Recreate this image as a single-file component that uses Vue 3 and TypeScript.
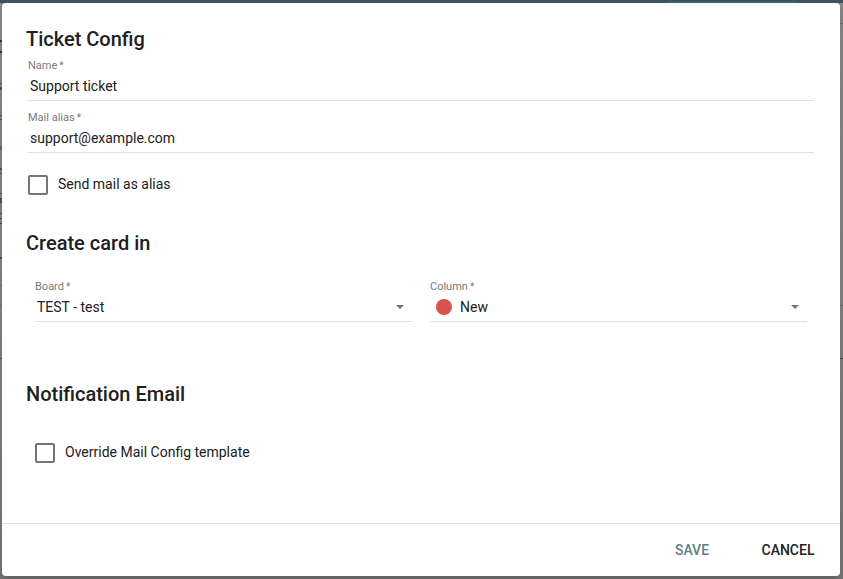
<script setup lang="ts">
import { ref } from 'vue'

const name = ref('Support ticket')
const alias = ref('support@example.com')
const sendAsAlias = ref(false)
const overrideTemplate = ref(false)
const board = ref('TEST - test')
const column = ref('New')
</script>

<template>
  <div class="page">
    <div class="backdrop" aria-hidden="true">
      <div class="topbar"><span class="tab"></span></div>
      <svg class="edge" width="2" height="400" viewBox="0 0 2 400">
        <path d="M0 40h2v2h-2zM0 51h2v2h-2z" fill="#303030" />
        <path d="M0 83h2v1h-2zM0 87h2v3h-2zM0 115h2v1h-2zM0 119h2v1h-2zM0 168h2v2h-2zM0 173h2v1h-2zM0 193h2v1h-2zM0 198h2v5h-2zM0 213h2v1h-2zM0 218h2v1h-2zM0 223h2v1h-2zM0 257h2v2h-2zM0 358h2v1h-2z" fill="#505050" />
        <path d="M0 146h2v4h-2z" fill="#955758" />
        <path d="M0 285h2v1h-2zM0 305h2v1h-2z" fill="#696969" />
      </svg>
      <svg class="edge right" width="3" height="400" viewBox="0 0 3 400">
        <path d="M0 23h3v1h-3zM0 305h3v1h-3z" fill="#6c6c6c" />
        <path d="M0 358h3v1h-3z" fill="#484848" />
      </svg>
    </div>

    <form class="dialog" role="dialog" aria-labelledby="dialog-title" @submit.prevent>
      <div class="content">
        <h2 id="dialog-title">Ticket Config</h2>
        <div class="fields">
          <div class="field">
            <label for="name">Name<span>*</span></label>
            <div class="control"><input id="name" v-model="name" type="text" /></div>
          </div>
          <div class="field">
            <label for="alias">Mail alias<span>*</span></label>
            <div class="control"><input id="alias" v-model="alias" type="text" /></div>
          </div>
          <label class="check"><input v-model="sendAsAlias" type="checkbox" /><span>Send mail as alias</span></label>
        </div>

        <h2 class="card-title">Create card in</h2>
        <div class="columns">
          <div class="field">
            <label for="board">Board<span>*</span></label>
            <div class="control">
              <select id="board" v-model="board"><option>TEST - test</option></select>
              <svg class="arrow" width="8" height="4" viewBox="0 0 8 4"><path d="M0 0h8L4 4z" fill="#757575" /></svg>
            </div>
          </div>
          <div class="field">
            <label for="column">Column<span>*</span></label>
            <div class="control">
              <i class="dot"></i>
              <select id="column" v-model="column"><option>New</option></select>
              <svg class="arrow" width="8" height="4" viewBox="0 0 8 4"><path d="M0 0h8L4 4z" fill="#757575" /></svg>
            </div>
          </div>
        </div>

        <h2 class="mail-title">Notification Email</h2>
        <label class="check inset"><input v-model="overrideTemplate" type="checkbox" /><span>Override Mail Config template</span></label>
      </div>

      <footer class="actions">
        <button class="primary" type="submit">SAVE</button>
        <button type="button">CANCEL</button>
      </footer>
    </form>
  </div>
</template>

<style>
body {
  background: #757575;
}
</style>

<style scoped>
* {
  box-sizing: border-box;
}
.page {
  position: relative;
  display: flex;
  min-height: 100vh;
  padding: 3px 3px 3px 2px;
  font-family: Roboto, "Liberation Sans", sans-serif;
  font-size: 14px;
  color: #212121;
}
.backdrop {
  position: absolute;
  inset: 0;
  overflow: hidden;
  background: linear-gradient(#868686, #808080 50%, #747474);
}
.topbar {
  display: flex;
  justify-content: flex-end;
  align-items: flex-end;
  height: 3px;
  padding-right: 45px;
  background: #43515a;
}
.tab {
  width: 132px;
  height: 1px;
  background: #24789a;
}
.edge {
  position: absolute;
  left: 0;
  top: 0;
}
.edge.right {
  left: auto;
  right: 0;
}
.dialog {
  position: relative;
  display: flex;
  flex: 1;
  flex-direction: column;
  min-width: 0;
  border-radius: 4px;
  background: #fff;
  box-shadow: 0 5px 6px -2px rgba(0, 0, 0, 0.2);
}
.content {
  flex: 1;
  padding: 22px 24px 24px;
}
h2 {
  margin: 0;
  font-size: 20px;
  font-weight: 500;
  line-height: 28px;
}
.fields {
  display: flex;
  flex-direction: column;
  gap: 10px;
  margin: 6px 2px 0;
}
.field {
  min-width: 0;
}
.field label {
  display: block;
  padding-top: 1px;
  font-size: 11px;
  line-height: 12px;
  color: #7b7b7b;
}
.field label span {
  margin-left: 2px;
  font-size: 10px;
}
.control {
  display: flex;
  align-items: center;
  height: 29px;
  padding-left: 2px;
  border-bottom: 1px solid #e0e0e0;
}
.control input,
.control select {
  flex: 1;
  min-width: 0;
  height: 28px;
  padding: 0;
  border: 0;
  outline: 0;
  background: transparent;
  color: inherit;
  font: inherit;
}
.control select {
  appearance: none;
}
.check {
  display: flex;
  align-items: center;
  gap: 10px;
  line-height: 20px;
}
.fields .check {
  margin-top: 11px;
}
.check input {
  appearance: none;
  width: 20px;
  height: 20px;
  margin: 0;
  border: 2px solid #757575;
  border-radius: 2px;
}
.check input:checked {
  background: #607d8b;
}
.check span {
  padding-bottom: 2px;
}
.card-title {
  margin-top: 33px;
}
.columns {
  display: grid;
  grid-template-columns: 1fr 1fr;
  gap: 18px;
  margin: 23px 9px 0;
}
.arrow {
  flex: none;
  margin-right: 8px;
}
.dot {
  flex: none;
  width: 16px;
  height: 16px;
  margin: 0 8px 0 4px;
  border-radius: 50%;
  background: #d9534f;
}
.mail-title {
  margin-top: 58px;
}
.inset {
  margin: 34px 9px 0;
}
.actions {
  display: flex;
  justify-content: flex-end;
  align-items: center;
  gap: 8px;
  min-height: 53px;
  padding: 0 8px;
  border-top: 1px solid #e0e0e0;
}
button {
  min-width: 88px;
  height: 36px;
  padding: 0 6px;
  border: 0;
  border-radius: 2px;
  background: transparent;
  color: inherit;
  font: 500 14px Roboto, "Liberation Sans", sans-serif;
}
.primary {
  color: #607d8b;
}
</style>
